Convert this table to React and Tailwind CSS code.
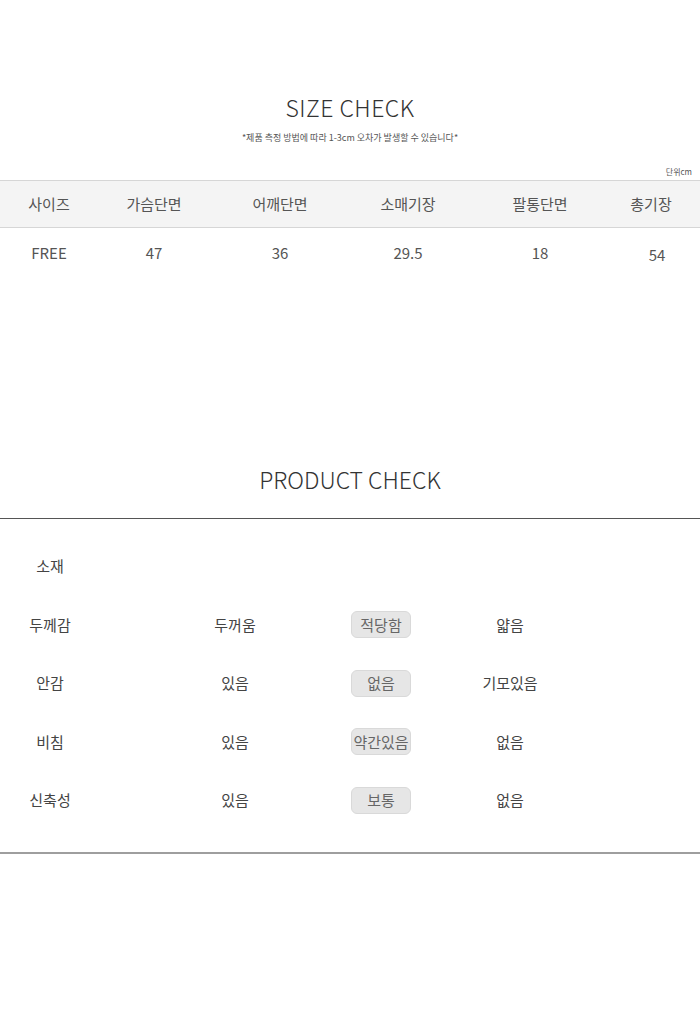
export default function App() {
  const heads = ["사이즈", "가슴단면", "어깨단면", "소매기장", "팔통단면", "총기장"];
  const vals = ["FREE", "47", "36", "29.5", "18", "54"];
  const widths = ["w-[98px]", "w-[112px]", "w-[140px]", "w-[116px]", "w-[148px]", "w-[86px]"];

  const rows = [
    { label: "소재", a: "", b: "", c: "" },
    { label: "두께감", a: "두꺼움", b: "적당함", c: "얇음" },
    { label: "안감", a: "있음", b: "없음", c: "기모있음" },
    { label: "비침", a: "있음", b: "약간있음", c: "없음" },
    { label: "신축성", a: "있음", b: "보통", c: "없음" },
  ];

  return (
    <div
      className="w-[700px] min-h-[1011px] bg-white text-[#444]"
      style={{ fontFamily: '"Noto Sans CJK KR", "Noto Sans", sans-serif' }}
    >
      {/* size check */}
      <div className="pt-[92px] text-center">
        <h1 className="text-[23px] leading-[30px] font-light text-[#333] tracking-[0.5px]">SIZE CHECK</h1>
        <p className="mt-[10px] text-[9px] leading-[12px] text-[#555]">
          *제품 측정 방법에 따라 1-3cm 오차가 발생할 수 있습니다*
        </p>
      </div>
      <div className="mt-[23px] pr-[8px] text-right text-[8px] leading-[10px] text-[#555]">단위cm</div>
      <div className="mt-[3px] flex h-[48px] items-center border-y border-[#d6d6d6] bg-[#f4f4f4] text-[15px] text-[#555]">
        {heads.map((h, i) => (
          <div key={h} className={`${widths[i]} text-center ${i === 5 ? "pr-[12px]" : ""}`}>
            {h}
          </div>
        ))}
      </div>
      <div className="flex h-[50px] items-center text-[15px] text-[#555]">
        {vals.map((v, i) => (
          <div key={v} className={`${widths[i]} text-center ${i === 5 ? "mt-[4px]" : ""}`}>
            {v}
          </div>
        ))}
      </div>

      {/* product check */}
      <h2 className="mt-[186px] text-center text-[23px] leading-[30px] font-light text-[#333]">
        PRODUCT CHECK
      </h2>
      <div className="mt-[24px] border-t-[1.5px] border-[#555]" />
      <div className="pt-[18px] pb-[22px]">
        {rows.map((r) => (
          <div key={r.label} className="flex h-[58.5px] items-center text-[15px] text-[#444]">
            <div className="w-[100px] text-center">{r.label}</div>
            <div className="ml-[85px] w-[100px] text-center">{r.a}</div>
            <div className="ml-[46px] flex w-[100px] justify-center">
              {r.b && (
                <span className="flex h-[27px] w-[60px] items-center justify-center rounded-[6px] border border-[#d9d9d9] bg-[#e6e6e6] text-[15px] text-[#666]">
                  {r.b}
                </span>
              )}
            </div>
            <div className="ml-[29px] w-[100px] text-center">{r.c}</div>
          </div>
        ))}
      </div>
      <div className="border-t-2 border-[#9e9e9e]" />
    </div>
  );
}
